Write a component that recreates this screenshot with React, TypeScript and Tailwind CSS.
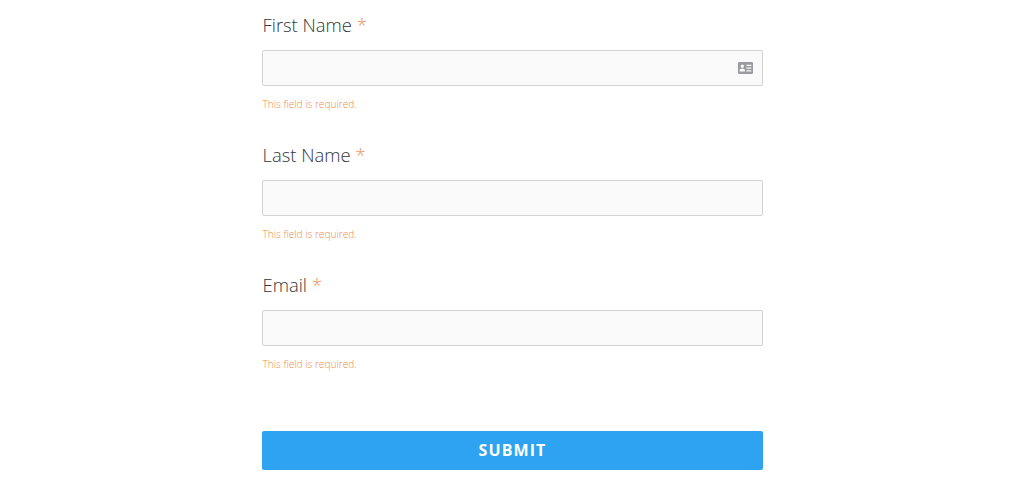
export default function App() {
  const fields = ["First Name", "Last Name", "Email"];
  return (
    <div className="w-full h-[493px] bg-white overflow-hidden flex justify-center font-['Open_Sans',sans-serif]">
      <div className="w-[501px] flex flex-col pt-[11px] ml-[1px]">
        {fields.map((f, i) => (
          <div key={f} className="h-[130px] flex flex-col">
            <label className="h-[28px] pl-[0.5px] leading-[28px] text-[18.4px] font-light text-[#33373a]">
              {f} <span className="text-[#e98f55] text-[19px]">*</span>
            </label>
            <div className="relative mt-[11px] h-[36px] bg-[#fafafa] border border-[#d2d2d2] rounded-[2px]">
              {i === 0 && (
                <svg viewBox="0 0 16 14" className="absolute right-[9px] top-[10px] w-[15px] h-[14px]">
                  <path fill="#999c9f" fillRule="evenodd" d="M1.5 0.5h13A1.5 1.5 0 0 1 16 2v10a1.5 1.5 0 0 1-1.5 1.5h-13A1.5 1.5 0 0 1 0 12V2A1.5 1.5 0 0 1 1.5 0.5ZM4.6 3.2a1.8 1.8 0 1 0 0 3.6 1.8 1.8 0 0 0 0-3.6ZM1.8 10.8h5.6V9.4c0-1-1-1.8-2.8-1.8s-2.8.8-2.8 1.8v1.4ZM9 3.6v1.3h5.2V3.6H9Zm0 2.8v1.3h5.2V6.4H9Zm0 2.9v1.3h5.2V9.3H9Z" />
                </svg>
              )}
            </div>
            <p className="mt-[11px] pl-[0.5px] text-[10.15px] leading-[14px] font-light text-[#ee8a4e]">This field is required.</p>
          </div>
        ))}
        <button className="mt-[30px] h-[39px] w-full pb-[2px] bg-[#2ea3f2] rounded-[2px] text-white text-[16px] font-bold tracking-[1.1px]">
          SUBMIT
        </button>
      </div>
    </div>
  );
}
